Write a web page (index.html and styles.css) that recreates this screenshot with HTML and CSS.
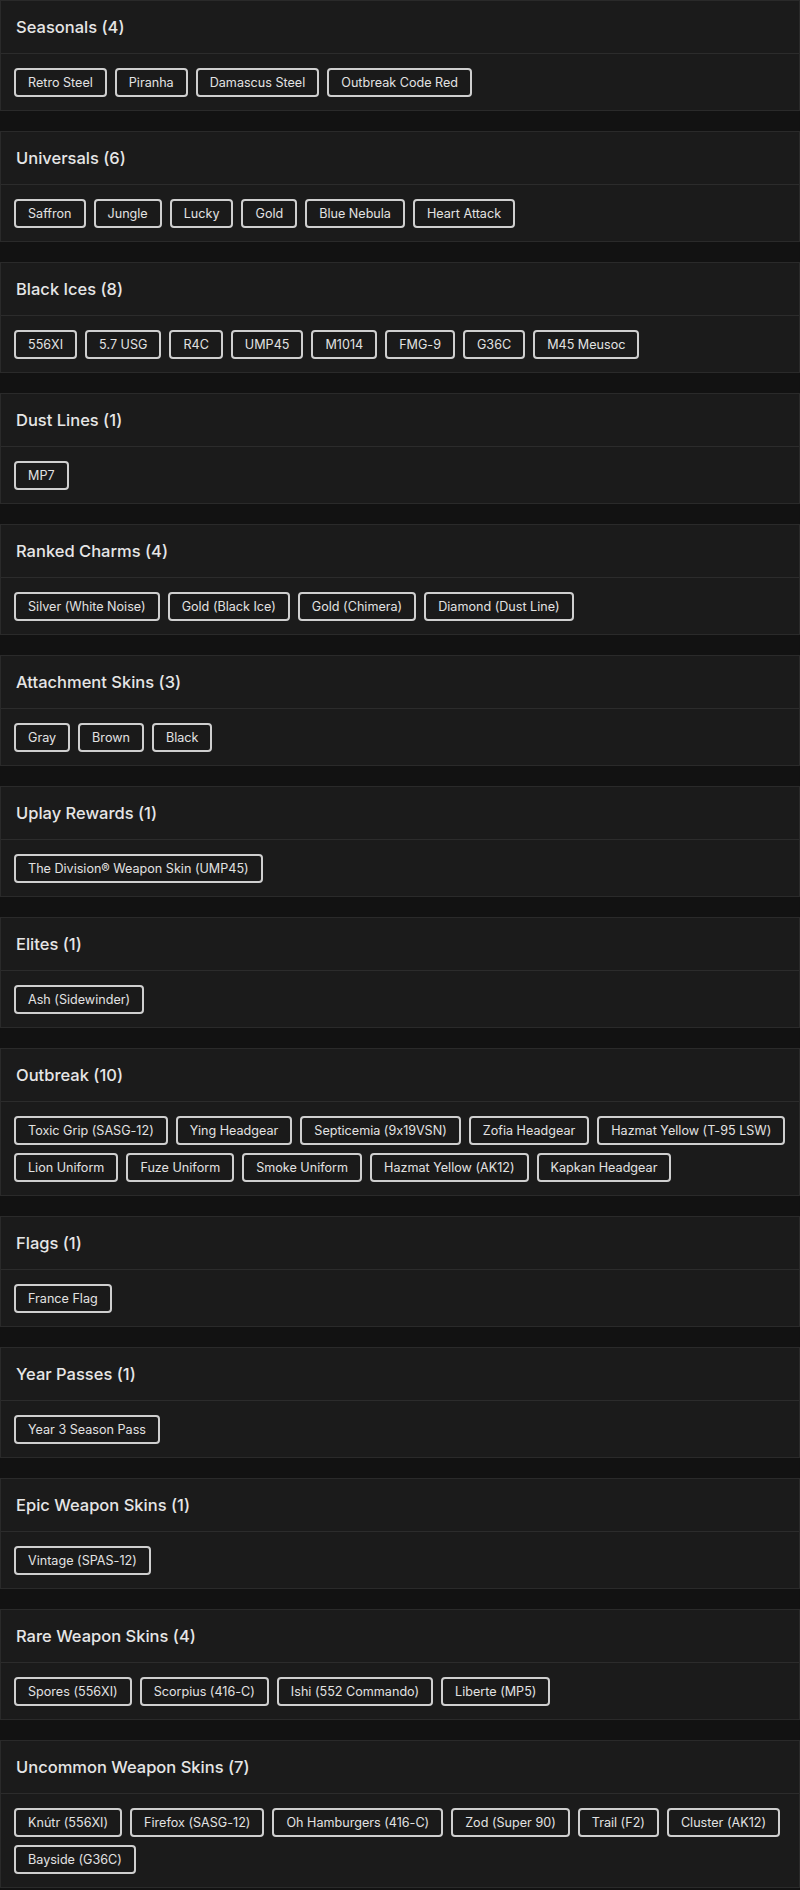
FILE: index.html
```html
<!DOCTYPE html>
<html lang="en">
<head>
<meta charset="utf-8">
<title>Items</title>
<link rel="stylesheet" href="styles.css">
</head>
<body>
<main class="list">
  <section class="card">
    <h2 class="card-header">Seasonals (4)</h2>
    <div class="card-body">
      <span class="tag">Retro Steel</span><span class="tag">Piranha</span><span class="tag">Damascus Steel</span><span class="tag">Outbreak Code Red</span>
    </div>
  </section>
  <section class="card">
    <h2 class="card-header">Universals (6)</h2>
    <div class="card-body">
      <span class="tag">Saffron</span><span class="tag">Jungle</span><span class="tag">Lucky</span><span class="tag">Gold</span><span class="tag">Blue Nebula</span><span class="tag">Heart Attack</span>
    </div>
  </section>
  <section class="card">
    <h2 class="card-header">Black Ices (8)</h2>
    <div class="card-body">
      <span class="tag">556XI</span><span class="tag">5.7 USG</span><span class="tag">R4C</span><span class="tag">UMP45</span><span class="tag">M1014</span><span class="tag">FMG-9</span><span class="tag">G36C</span><span class="tag">M45 Meusoc</span>
    </div>
  </section>
  <section class="card">
    <h2 class="card-header">Dust Lines (1)</h2>
    <div class="card-body">
      <span class="tag">MP7</span>
    </div>
  </section>
  <section class="card">
    <h2 class="card-header">Ranked Charms (4)</h2>
    <div class="card-body">
      <span class="tag">Silver (White Noise)</span><span class="tag">Gold (Black Ice)</span><span class="tag">Gold (Chimera)</span><span class="tag">Diamond (Dust Line)</span>
    </div>
  </section>
  <section class="card">
    <h2 class="card-header">Attachment Skins (3)</h2>
    <div class="card-body">
      <span class="tag">Gray</span><span class="tag">Brown</span><span class="tag">Black</span>
    </div>
  </section>
  <section class="card">
    <h2 class="card-header">Uplay Rewards (1)</h2>
    <div class="card-body">
      <span class="tag">The Division® Weapon Skin (UMP45)</span>
    </div>
  </section>
  <section class="card">
    <h2 class="card-header">Elites (1)</h2>
    <div class="card-body">
      <span class="tag">Ash (Sidewinder)</span>
    </div>
  </section>
  <section class="card">
    <h2 class="card-header">Outbreak (10)</h2>
    <div class="card-body">
      <span class="tag">Toxic Grip (SASG-12)</span><span class="tag">Ying Headgear</span><span class="tag">Septicemia (9x19VSN)</span><span class="tag">Zofia Headgear</span><span class="tag">Hazmat Yellow (T-95 LSW)</span><span class="tag">Lion Uniform</span><span class="tag">Fuze Uniform</span><span class="tag">Smoke Uniform</span><span class="tag">Hazmat Yellow (AK12)</span><span class="tag">Kapkan Headgear</span>
    </div>
  </section>
  <section class="card">
    <h2 class="card-header">Flags (1)</h2>
    <div class="card-body">
      <span class="tag">France Flag</span>
    </div>
  </section>
  <section class="card">
    <h2 class="card-header">Year Passes (1)</h2>
    <div class="card-body">
      <span class="tag">Year 3 Season Pass</span>
    </div>
  </section>
  <section class="card">
    <h2 class="card-header">Epic Weapon Skins (1)</h2>
    <div class="card-body">
      <span class="tag">Vintage (SPAS-12)</span>
    </div>
  </section>
  <section class="card">
    <h2 class="card-header">Rare Weapon Skins (4)</h2>
    <div class="card-body">
      <span class="tag">Spores (556XI)</span><span class="tag">Scorpius (416-C)</span><span class="tag">Ishi (552 Commando)</span><span class="tag">Liberte (MP5)</span>
    </div>
  </section>
  <section class="card">
    <h2 class="card-header">Uncommon Weapon Skins (7)</h2>
    <div class="card-body">
      <span class="tag">Knútr (556XI)</span><span class="tag">Firefox (SASG-12)</span><span class="tag">Oh Hamburgers (416-C)</span><span class="tag">Zod (Super 90)</span><span class="tag">Trail (F2)</span><span class="tag">Cluster (AK12)</span><span class="tag">Bayside (G36C)</span>
    </div>
  </section>
</main>
</body>
</html>
```

FILE: styles.css
```css
html, body {
  margin: 0;
  padding: 0;
  background: #121212;
}

body {
  font-family: Inter, "Open Sans", "DejaVu Sans", sans-serif;
  font-feature-settings: "calt" 0;
  color: #e4e4e4;
}

.list {
  display: flex;
  flex-direction: column;
  gap: 20px;
}

.card {
  background: #1b1b1b;
  border: 1px solid #2a2a2a;
}

.card-header {
  margin: 0;
  padding: 16px 15px;
  font-size: 16.5px;
  line-height: 20px;
  font-weight: 500;
  color: #e6e6e6;
  border-bottom: 1px solid #2c2c2c;
}

.card-body {
  display: flex;
  flex-wrap: wrap;
  padding: 10px 9px 9px 9px;
}

.tag {
  margin: 4px;
  padding: 4px 12px;
  font-size: 12.6px;
  line-height: 17px;
  color: #e2e2e2;
  border: 2px solid #cfcfcf;
  border-radius: 4px;
  background: #1a1a1a;
  white-space: nowrap;
}
```
